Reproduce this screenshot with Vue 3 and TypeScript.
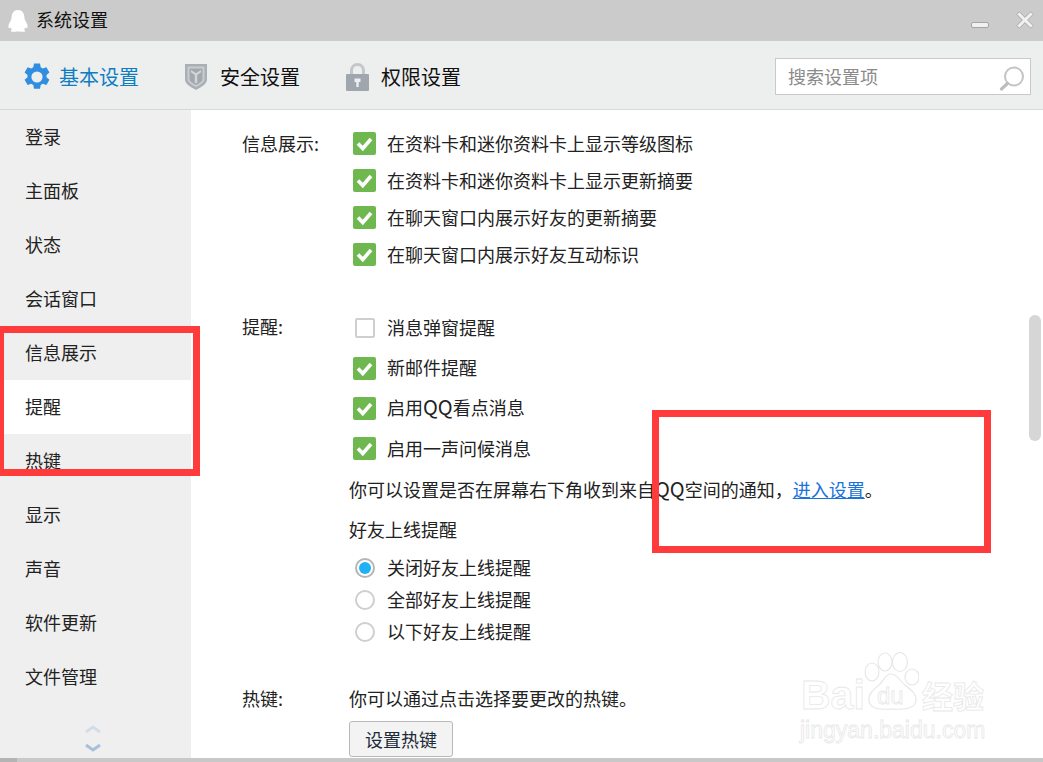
<script setup lang="ts">
const navItems: string[] = ['登录', '主面板', '状态', '会话窗口', '信息展示', '提醒', '热键', '显示', '声音', '软件更新', '文件管理']
const infoOptions: string[] = ['在资料卡和迷你资料卡上显示等级图标', '在资料卡和迷你资料卡上显示更新摘要', '在聊天窗口内展示好友的更新摘要', '在聊天窗口内展示好友互动标识']
const remindOptions = [
  { before: '消息弹窗提醒', qq: false, after: '', on: false },
  { before: '新邮件提醒', qq: false, after: '', on: true },
  { before: '启用', qq: true, after: '看点消息', on: true },
  { before: '启用一声问候消息', qq: false, after: '', on: true },
]
const radios = [
  { text: '关闭好友上线提醒', on: true },
  { text: '全部好友上线提醒', on: false },
  { text: '以下好友上线提醒', on: false },
]
</script>

<template>
  <div class="win">
    <header class="titlebar">
      <svg class="penguin" viewBox="0 0 20 22" width="20" height="22">
        <path fill="#fff" d="M10 0C5.600 0 3.800 3.400 3.600 7.200 3.500 9.600 2.400 11 1.400 13 0.400 15 0 17.400 0.800 18 1.400 18.400 2 18 2.600 17.200 2.900 18.400 3.400 19.200 4 19.800 3 20.300 2.600 20.800 2.800 21.300 3.200 22 7 22 8.400 21.400 9.400 21.500 10.600 21.500 11.600 21.400 13 22 16.800 22 17.200 21.300 17.400 20.800 17 20.300 16 19.800 16.600 19.200 17.100 18.400 17.400 17.200 18 18 18.600 18.400 19.200 18 20 17.400 19.600 15 18.600 13 17.600 11 16.500 9.600 16.400 7.200 16.200 3.400 14.400 0 10 0Z"/>
      </svg>
      <span class="title-text">系统设置</span>
      <div class="win-controls">
        <span class="minimize"></span>
        <svg viewBox="0 0 18 18" width="18" height="18" class="close">
          <path d="M0.800 3.400L3.400 0.800L9 6.400L14.600 0.800L17.200 3.400L11.600 9L17.200 14.600L14.600 17.200L9 11.600L3.400 17.200L0.800 14.600L6.400 9Z" fill="#f1f1f1" stroke="#a3a3a3" stroke-width="0.900"/>
        </svg>
      </div>
    </header>

    <div class="toolbar">
      <div class="tab active">
        <span class="tab-icon">
          <svg viewBox="0 0 26 28" width="26" height="28">
            <path fill="#2f8ee0" d="M10 0.500h6l0.700 3.700 2.100 1.200 3.600-1.200 3 5.200-2.900 2.500v2.400l2.900 2.500-3 5.200-3.600-1.200-2.100 1.200-0.700 3.700h-6l-0.700-3.700-2.100-1.200-3.600 1.200-3-5.200 2.900-2.500v-2.400L0.600 9.400l3-5.200 3.600 1.200 2.100-1.200Z"/>
            <circle cx="13" cy="14" r="5.600" fill="#edeeee"/>
          </svg>
        </span>
        <span>基本设置</span>
      </div>
      <div class="tab">
        <span class="tab-icon">
          <svg viewBox="0 0 22 26" width="22" height="26">
            <path fill="#a9b0b5" d="M0 0h22v15.500c0 4.200-5.500 7.500-11 10.500C5.500 23 0 19.700 0 15.500Z"/>
            <path fill="#c8cccf" d="M2.500 2.500h17v12.800c0 3-4.500 5.700-8.500 7.900-4-2.200-8.500-4.900-8.500-7.900Z"/>
            <path fill="#a2a9ae" d="M4.500 4.500h13v10.500c0 2.300-3.300 4.300-6.500 6-3.200-1.700-6.500-3.700-6.500-6Z"/>
            <path fill="#d3d6d8" d="M6 6l5 3.300L16 6v2.200l-3.800 2.900v8h-2.400v-8L6 8.200Z"/>
          </svg>
        </span>
        <span>安全设置</span>
      </div>
      <div class="tab">
        <span class="tab-icon">
          <svg viewBox="0 0 23 28" width="23" height="28">
            <path fill="none" stroke="#c3c7cb" stroke-width="3" d="M5.500 12V7.500C5.500 4 8 1.500 11.500 1.500S17.500 4 17.500 7.500V12"/>
            <rect x="0" y="11" width="23" height="17" rx="1" fill="#a0a6ad"/>
            <path fill="#edeeee" d="M8.500 15.500h6v3.500h-1.800v5h-2.400v-5H8.500Z"/>
          </svg>
        </span>
        <span>权限设置</span>
      </div>
      <div class="search">
        <span class="search-text">搜索设置项</span>
        <svg viewBox="0 0 28 28" width="28" height="28" class="search-icon">
          <circle cx="15" cy="13.500" r="9" fill="none" stroke="#c4c4c4" stroke-width="2"/>
          <path d="M8.500 20.500L2.500 26" stroke="#bdbdbd" stroke-width="3.200" stroke-linecap="round"/>
        </svg>
      </div>
    </div>

    <div class="main">
      <nav class="side">
        <div v-for="item in navItems" :key="item" class="nav-item" :class="{ current: item === '提醒' }">{{ item }}</div>
        <div class="pager">
          <svg viewBox="0 0 16 8" width="16" height="8"><path d="M1 7L8 2L15 7" fill="none" stroke="#d3dcea" stroke-width="3"/></svg>
          <svg viewBox="0 0 16 8" width="16" height="8"><path d="M1 1L8 6L15 1" fill="none" stroke="#a9bfdc" stroke-width="3"/></svg>
        </div>
      </nav>

      <section class="content">
        <div class="group group-info">
          <div class="label">信息展示:</div>
          <div class="fields">
            <div v-for="o in infoOptions" :key="o" class="row row-info">
              <span class="check on">
                <svg viewBox="0 0 23 23" width="23" height="23"><path d="M5 11.500L9.800 16.500L18 7" fill="none" stroke="#fff" stroke-width="3.600"/></svg>
              </span>
              <span>{{ o }}</span>
            </div>
          </div>
        </div>

        <div class="group group-remind">
          <div class="label">提醒:</div>
          <div class="fields">
            <div v-for="o in remindOptions" :key="o.before" class="row row-remind">
              <span class="check" :class="{ on: o.on }">
                <svg v-if="o.on" viewBox="0 0 23 23" width="23" height="23"><path d="M5 11.500L9.800 16.500L18 7" fill="none" stroke="#fff" stroke-width="3.600"/></svg>
                <span v-else class="empty"></span>
              </span>
              <span>{{ o.before }}<span v-if="o.qq" class="qq">QQ</span>{{ o.after }}</span>
            </div>
            <div class="line notice">你可以设置是否在屏幕右下角收到来自<span class="qq">QQ</span>空间的通知，<a class="link">进入设置</a>。</div>
            <div class="line friends">好友上线提醒</div>
            <div v-for="r in radios" :key="r.text" class="row row-radio">
              <span class="radio" :class="{ on: r.on }"></span>
              <span>{{ r.text }}</span>
            </div>
          </div>
        </div>

        <div class="group group-hotkey">
          <div class="label">热键:</div>
          <div class="fields">
            <div class="line">你可以通过点击选择要更改的热键。</div>
            <button class="btn">设置热键</button>
          </div>
        </div>

        <div class="thumb"></div>

        <div class="mark">
          <svg class="paw" viewBox="0 0 56 60" width="56" height="60">
            <g fill="#fff" stroke="#e6e6e6" stroke-width="1.100">
              <ellipse cx="9" cy="20" rx="7" ry="9"/>
              <ellipse cx="22" cy="10" rx="7" ry="9"/>
              <ellipse cx="37" cy="10" rx="7.500" ry="9.500"/>
              <ellipse cx="49" cy="25" rx="7" ry="8"/>
              <path d="M28 22C34 22 36 28 42 33 48 38 54 42 53 49 52 56 44 58 29 57 14 58 7 56 6 49 5 42 10 38 16 33 21 29 22 22 28 22Z"/>
            </g>
          </svg>
          <span class="mark-bai">Bai</span>
          <span class="mark-du">du</span>
          <span class="mark-cn">经验</span>
          <span class="mark-url">jingyan.baidu.com</span>
        </div>
      </section>
    </div>

    <div class="footer"></div>

    <div class="redbox box-a"></div>
    <div class="redbox box-b"></div>
  </div>
</template>

<style scoped>
.win {
  position: relative;
  width: 1043px;
  height: 762px;
  overflow: hidden;
  display: flex;
  flex-direction: column;
  background: #fff;
  color: #1a1a1a;
  font-family: "Noto Sans CJK SC", "Liberation Sans", sans-serif;
  font-size: 18px;
}
.titlebar {
  height: 41px;
  flex: none;
  background: #cbcbcb;
  display: flex;
  align-items: center;
  padding-left: 8px;
  box-sizing: border-box;
}
.penguin { margin-right: 8px; }
.title-text { line-height: 41px; color: #111; margin-top: -2px; }
.win-controls {
  margin-left: auto;
  display: flex;
  align-items: flex-start;
  padding-right: 9px;
  height: 100%;
}
.minimize {
  width: 18px;
  height: 6px;
  margin-top: 22px;
  margin-right: 27px;
  background: #f1f1f1;
  border: 1px solid #a5a5a5;
  box-sizing: border-box;
  border-radius: 2px;
}
.close { margin-top: 11px; }
.toolbar {
  height: 69px;
  flex: none;
  box-sizing: border-box;
  background: #edeeee;
  border-bottom: 1px solid #d8d8d8;
  display: flex;
  align-items: center;
  padding: 3px 12px 0 24px;
  font-size: 20px;
  color: #111;
}
.tab {
  width: 161px;
  display: flex;
  align-items: center;
}
.tab-icon { width: 35px; display: flex; }
.tab.active { color: #0f7dc2; }
.search {
  margin-left: auto;
  width: 256px;
  height: 37px;
  box-sizing: border-box;
  background: #fff;
  border: 1px solid #c9c9c9;
  display: flex;
  align-items: center;
  padding: 0 3px 0 12px;
  font-size: 18px;
  color: #8a8a8a;
}
.search-text { margin-top: -2px; }
.search-icon { margin-left: auto; }
.main {
  flex: 1;
  display: flex;
  min-height: 0;
}
.side {
  width: 191px;
  flex: none;
  background: #efefef;
  position: relative;
}
.nav-item {
  height: 54px;
  line-height: 53px;
  padding-left: 25px;
  color: #222;
}
.nav-item.current { background: #fff; }
.pager {
  display: flex;
  flex-direction: column;
  align-items: center;
  gap: 11px;
  padding-top: 21px;
  padding-right: 6px;
}
.content {
  flex: 1;
  position: relative;
  overflow: hidden;
  padding-left: 51px;
}
.group { display: flex; }
.label { width: 107px; flex: none; line-height: 26px; color: #222; }
.group-info { padding-top: 15px; }
.group-remind { padding-top: 35px; }
.group-hotkey { padding-top: 37px; }
.group-info .label { padding-top: 5px; }
.group-remind .label { padding-top: 5px; }
.row {
  display: flex;
  align-items: center;
  color: #222;
}
.row-info { height: 37px; }
.row-remind { height: 40.200px; }
.row-radio { height: 32px; }
.row > span:last-child { margin-top: -2px; }
.check {
  width: 23px;
  height: 23px;
  margin: 0 11px 0 4px;
  flex: none;
  display: flex;
  align-items: center;
  justify-content: center;
  border-radius: 2px;
}
.check.on { background: #6fb84f; }
.empty {
  width: 20px;
  height: 20px;
  box-sizing: border-box;
  border: 2px solid #cfcfcf;
  border-radius: 2px;
  background: #fff;
}
.radio {
  width: 20px;
  height: 20px;
  margin: 0 12px 0 6px;
  flex: none;
  box-sizing: border-box;
  border: 2px solid #cfcfcf;
  border-radius: 50%;
  background: #fff;
  position: relative;
}
.radio.on { border-color: #b5b5b5; }
.radio.on::after {
  content: "";
  position: absolute;
  left: 2px;
  top: 2px;
  width: 12px;
  height: 12px;
  border-radius: 50%;
  background: #1fb0f5;
}
.line { line-height: 26px; color: #222; }
.qq { font-size: 20px; line-height: 0; }
.notice { margin-top: 7px; }
.friends { margin-top: 14px; margin-bottom: 10px; }
.link { color: #1a73d9; text-decoration: underline; }
.group-hotkey .fields { display: flex; flex-direction: column; align-items: flex-start; }
.btn {
  margin-top: 10px;
  width: 104px;
  height: 36px;
  background: #f3f3f3;
  border: 1px solid #b9b9b9;
  border-radius: 3px;
  font: inherit;
  color: #1d2a38;
  padding: 0;
}
.thumb {
  position: absolute;
  right: 2px;
  top: 205px;
  width: 12px;
  height: 126px;
  background: #d6d6d6;
  border-radius: 6px;
}
.mark {
  position: absolute;
  left: 609px;
  top: 540px;
  width: 200px;
  height: 90px;
  font-family: "Liberation Sans", sans-serif;
  color: #fff;
  -webkit-text-stroke: 0.800px #e8e8e8;
}
.mark span { position: absolute; white-space: nowrap; }
.paw { position: absolute; left: 63px; top: 2px; }
.mark-bai { left: 1px; top: 22px; font-size: 41px; font-weight: 700; line-height: 46px; }
.mark-du { left: 77px; top: 32px; font-size: 24px; line-height: 28px; }
.mark-cn { left: 122px; top: 26px; font-size: 31px; line-height: 38px; font-family: "Noto Sans CJK SC", sans-serif; font-weight: 700; }
.mark-url { left: 0; top: 66px; font-size: 23px; line-height: 28px; }
.footer {
  height: 4px;
  flex: none;
  background: linear-gradient(to right, #b4b4b4 17px, #c8c8c8 17px);
}
.redbox {
  position: absolute;
  box-sizing: border-box;
  border: 7px solid #ff3b3b;
  pointer-events: none;
}
.box-a {
  left: 0;
  top: 326px;
  width: 200px;
  height: 150px;
  border-left-width: 4px;
}
.box-b {
  left: 652px;
  top: 410px;
  width: 339px;
  height: 143px;
}
</style>

<style>
html, body { margin: 0; background: #fff; }
</style>
